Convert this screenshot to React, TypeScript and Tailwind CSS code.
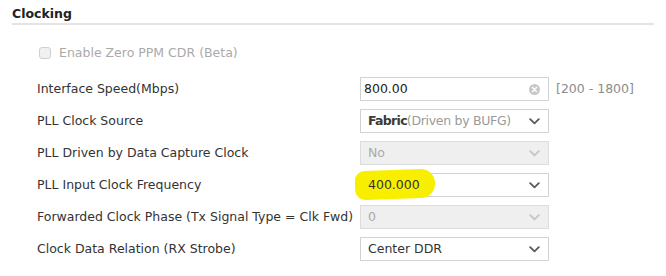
import React from "react";

const font = { fontFamily: '"DejaVu Sans", Verdana, sans-serif' };

function Chevron({ muted }: { muted?: boolean }) {
  return (
    <svg width="11" height="7" viewBox="0 0 11 7" className="shrink-0">
      <path
        d="M1.2 1.2 L5.5 5.4 L9.8 1.2"
        fill="none"
        stroke={muted ? "#c4c4c4" : "#5a5a5a"}
        strokeWidth="1.8"
        strokeLinecap="round"
        strokeLinejoin="round"
      />
    </svg>
  );
}

function ClearIcon() {
  return (
    <svg width="11" height="11" viewBox="0 0 11 11" className="shrink-0">
      <circle cx="5.5" cy="5.5" r="5.5" fill="#c8c8c8" />
      <path d="M3.5 3.5 L7.5 7.5 M7.5 3.5 L3.5 7.5" stroke="#fff" strokeWidth="1.4" strokeLinecap="round" />
    </svg>
  );
}

function Select({
  children,
  disabled,
}: {
  children: React.ReactNode;
  disabled?: boolean;
}) {
  return (
    <div
      className={
        disabled
          ? "flex h-[24px] w-[189px] items-center justify-between border border-[#dcdcdc] bg-[#efefef] pl-[7px] pr-[8px] text-[#aaaaaa]"
          : "flex h-[24px] w-[189px] items-center justify-between border border-[#d2d2d2] bg-white pl-[7px] pr-[8px] text-[#333333]"
      }
    >
      <span className="relative z-10 truncate">{children}</span>
      <Chevron muted={disabled} />
    </div>
  );
}

function Row({ label, children }: { label: string; children: React.ReactNode }) {
  return (
    <div className="flex h-[24px] items-center">
      <div className="w-[323px] shrink-0 whitespace-nowrap text-[#333333]">{label}</div>
      {children}
    </div>
  );
}

export default function App() {
  return (
    <div className="h-[276px] w-[666px] bg-white px-3 pt-[5px] text-[12.5px]" style={font}>
      <div className="border-b-2 border-[#e4e4e4] text-[12.5px] font-bold leading-[18px] text-[#222222]">
        Clocking
      </div>

      <div className="mt-4 pl-[25px]">
        <div className="flex h-[24px] items-center gap-[8px] pl-[2px] text-[#aaaaaa]">
          <span className="h-[12px] w-[12px] rounded-[3px] border border-[#cfcfcf] bg-[#f1f1f1]" />
          <span>Enable Zero PPM CDR (Beta)</span>
        </div>

        <div className="mt-3 flex flex-col gap-2">
          <Row label="Interface Speed(Mbps)">
            <div className="flex h-[24px] w-[189px] items-center justify-between border border-[#d2d2d2] bg-white pl-[3px] pr-[8px] text-[#222222]">
              <span>800.00</span>
              <ClearIcon />
            </div>
            <span className="ml-[7px] text-[#8c8c8c]">[200 - 1800]</span>
          </Row>
          <Row label="PLL Clock Source">
            <Select>
              <span className="font-bold tracking-[-0.7px] text-[#3a3a3a]">Fabric</span>
              <span className="tracking-[-0.3px] text-[#9a9a9a]">(Driven by BUFG)</span>
            </Select>
          </Row>
          <Row label="PLL Driven by Data Capture Clock">
            <Select disabled>No</Select>
          </Row>
          <Row label="PLL Input Clock Frequency">
            <div className="relative">
              <div className="absolute left-[-5px] top-[-3px] h-[29px] w-[80px] -rotate-2 rounded-l-[10px] rounded-r-[14px] bg-[#f7ee00]" />
              <Select>400.000</Select>
            </div>
          </Row>
          <Row label="Forwarded Clock Phase (Tx Signal Type = Clk Fwd)">
            <Select disabled>0</Select>
          </Row>
          <Row label="Clock Data Relation (RX Strobe)">
            <Select>Center DDR</Select>
          </Row>
        </div>
      </div>
    </div>
  );
}
